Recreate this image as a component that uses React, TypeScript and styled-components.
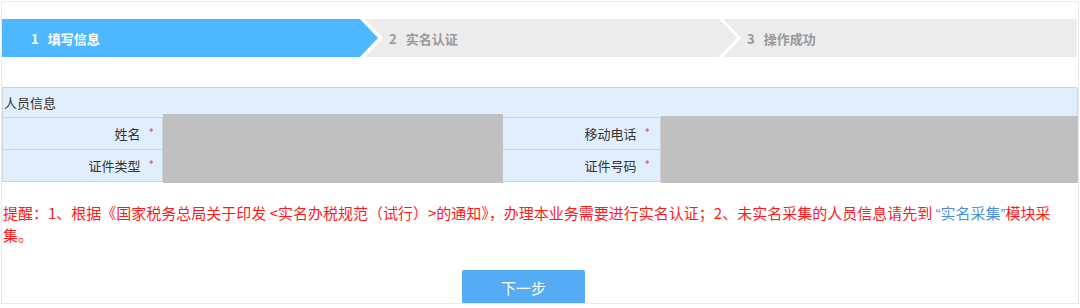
import React from "react";
import styled, { createGlobalStyle } from "styled-components";

const GlobalStyle = createGlobalStyle`
  html, body { margin: 0; padding: 0; background: #ffffff; }
  body { font-family: "Microsoft YaHei", "Noto Sans CJK SC", sans-serif; }
  * { box-sizing: border-box; }
`;

const Page = styled.div`
  margin: 1px 0 0 1px;
  width: 1078px;
  height: 303px;
  border: 1px solid #e4edf5;
  padding: 17px 1px 0 0;
  overflow: hidden;
`;

const Steps = styled.div`
  display: flex;
  height: 38px;
`;

type StepKind = "first" | "middle" | "last";

const clips: Record<StepKind, string> = {
  first: "polygon(0 0, calc(100% - 18px) 0, 100% 50%, calc(100% - 18px) 100%, 0 100%)",
  middle:
    "polygon(0 0, calc(100% - 18px) 0, 100% 50%, calc(100% - 18px) 100%, 0 100%, 18px 50%)",
  last: "polygon(0 0, 100% 0, 100% 100%, 0 100%, 18px 50%)",
};

const Step = styled.div<{ $kind: StepKind; $active?: boolean; $w?: number }>`
  display: flex;
  align-items: center;
  height: 38px;
  flex: ${(p) => (p.$w ? `0 0 ${p.$w}px` : "1 1 auto")};
  margin-left: ${(p) => (p.$kind === "first" ? "0" : p.$kind === "middle" ? "-13px" : "-14px")};
  padding-left: ${(p) => (p.$kind === "first" ? "29px" : "24px")};
  background: ${(p) => (p.$active ? "#4db8ff" : "#ececec")};
  color: ${(p) => (p.$active ? "#ffffff" : "#999999")};
  clip-path: ${(p) => clips[p.$kind]};
  font-size: 13px;
  font-weight: bold;
`;

const StepNum = styled.span`
  margin-right: 9px;
`;

const Table = styled.div`
  margin-top: 30px;
  display: grid;
  grid-template-columns: 160px 340px 158px 417px;
  grid-template-rows: 30px 32px 32px;
  border-top: 1px solid #d0d4d8;
  border-left: 1px solid #d0d4d8;
  background: #e1effd;
  font-size: 13px;
  color: #333333;
`;

const HeaderCell = styled.div`
  grid-column: 1 / span 4;
  display: flex;
  align-items: center;
  padding-left: 1px;
  border-right: 1px solid #d0d4d8;
  border-bottom: 1px solid #d0d4d8;
`;

const LabelCell = styled.div<{ $row: number; $col: number; $pr: number }>`
  grid-row: ${(p) => p.$row};
  grid-column: ${(p) => p.$col};
  display: flex;
  align-items: center;
  justify-content: flex-end;
  padding-right: ${(p) => p.$pr}px;
  border-right: 1px solid #d0d4d8;
  border-bottom: 1px solid #d0d4d8;
`;

const Star = styled.span`
  color: #f0506e;
  font-size: 12px;
  margin-left: 8px;
  position: relative;
  top: -1px;
`;

const Redacted = styled.div<{ $col: number; $top: number }>`
  grid-row: 2 / span 2;
  grid-column: ${(p) => p.$col};
  margin-top: -${(p) => p.$top}px;
  margin-bottom: -1px;
  background: #c0c0c0;
`;

const Notice = styled.p`
  margin: 20px 0 0 0;
  padding-left: 1px;
  font-size: 15px;
  line-height: 21px;
  color: #ff1a1a;
`;

const Link = styled.span`
  color: #4a90d9;
`;

const Quote = styled.span`
  font-family: "Liberation Sans", sans-serif;
`;

const Actions = styled.div`
  margin-top: 25px;
  padding-left: 460px;
`;

const NextButton = styled.button`
  width: 123px;
  height: 34px;
  border: none;
  border-radius: 2px;
  background: #55acf5;
  color: #ffffff;
  font-family: "Microsoft YaHei", "Noto Sans CJK SC", sans-serif;
  font-size: 15px;
  cursor: pointer;
`;

export default function App() {
  return (
    <>
      <GlobalStyle />
      <Page>
        <Steps>
          <Step $kind="first" $active $w={376}>
            <StepNum>1</StepNum>填写信息
          </Step>
          <Step $kind="middle" $w={372}>
            <StepNum>2</StepNum>实名认证
          </Step>
          <Step $kind="last">
            <StepNum>3</StepNum>操作成功
          </Step>
        </Steps>

        <Table>
          <HeaderCell>人员信息</HeaderCell>
          <LabelCell $row={2} $col={1} $pr={8}>
            姓名<Star>*</Star>
          </LabelCell>
          <Redacted $col={2} $top={4} />
          <LabelCell $row={2} $col={3} $pr={10}>
            移动电话<Star>*</Star>
          </LabelCell>
          <Redacted $col={4} $top={2} />
          <LabelCell $row={3} $col={1} $pr={8}>
            证件类型<Star>*</Star>
          </LabelCell>
          <LabelCell $row={3} $col={3} $pr={10}>
            证件号码<Star>*</Star>
          </LabelCell>
        </Table>

        <Notice>
          提醒：1、根据《国家税务总局关于印发 &lt;实名办税规范（试行）&gt;的通知》，办理本业务需要进行实名认证；2、未实名采集的人员信息请先到{" "}
          <Link>
            <Quote>“</Quote>实名采集<Quote>”</Quote>
          </Link>
          模块采集。
        </Notice>

        <Actions>
          <NextButton>下一步</NextButton>
        </Actions>
      </Page>
    </>
  );
}
